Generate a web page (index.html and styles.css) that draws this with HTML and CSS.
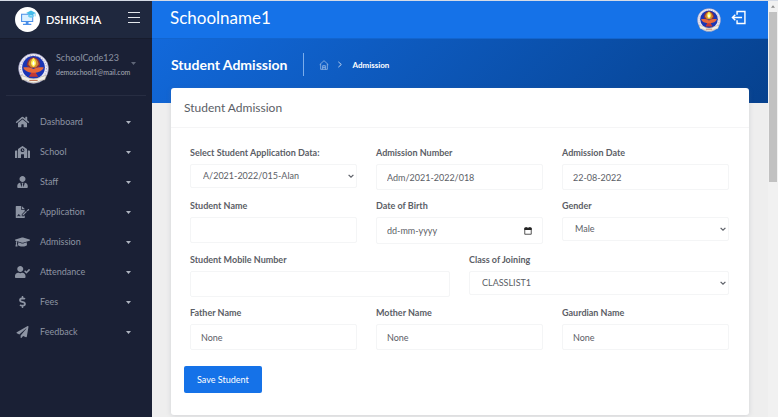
FILE: index.html
```html
<!DOCTYPE html>
<html lang="en">
<head>
<meta charset="utf-8">
<title>Student Admission</title>
<link rel="stylesheet" href="styles.css">
</head>
<body>
<svg class="defs" aria-hidden="true">
  <defs>
    <symbol id="crest" viewBox="0 0 60 60">
      <circle cx="30" cy="30" r="29" fill="#eceaf2" stroke="#7d7cae" stroke-width="1"/>
      <circle cx="30" cy="30" r="25" fill="none" stroke="#a9a5c8" stroke-width="2" stroke-dasharray="2 3"/>
      <circle cx="30" cy="28" r="22" fill="#1a35b5"/>
      <path d="M17 24C18 3 42 3 43 24l-5 5H22z" fill="#8d2f3c"/>
      <path d="M20 22c2-16 18-16 20 0l-5 6H25z" fill="#d08a34"/>
      <path d="M30 9c7 8 6 14 0 18-6-4-7-10 0-18z" fill="#fff04f"/>
      <path d="M30 15c3 4 3 7 0 9-3-2-3-5 0-9z" fill="#fff"/>
      <path d="M10 28c8-1 15 0 20 3 5-3 12-4 20-3-3 7-10 9-16 10l2 5H24l2-5c-6-1-13-3-16-10z" fill="#e8693a"/>
      <path d="M26 38h8l5 8H21z" fill="#c23a35"/>
      <path d="M5 43l10 3c9 5 21 5 30 0l10-3-3 9-8 1c-9 6-19 6-28 0l-8-1z" fill="#f3f0e8" stroke="#a29a8a" stroke-width="1"/>
      <path d="M22 53h16" stroke="#bc6b49" stroke-width="2"/>
    </symbol>
    <symbol id="caret" viewBox="0 0 10 6"><path d="M0 0h10L5 6z" fill="currentColor"/></symbol>
    <symbol id="chevron" viewBox="0 0 10 10"><path d="M1 3l4 4 4-4" fill="none" stroke="currentColor" stroke-width="2"/></symbol>
  </defs>
</svg>

<div class="app">
  <aside class="sidebar">
    <div class="brand">
      <svg class="brand-logo" viewBox="0 0 72 72" aria-hidden="true">
        <circle cx="36" cy="36" r="36" fill="#fff"/>
        <path d="M19 21h32v21H19z" fill="#dbf0ff" stroke="#4a8fe8" stroke-width="3"/>
        <path d="M31 43h8v5h8v4H23v-4h8z" fill="#4a8fe8"/>
        <path d="M32 17l14-7 14 7-14 7z" fill="#45bdea"/>
        <path d="M38 21v7c5 4 11 4 16 0v-7l-8 4z" fill="#6accf0"/>
        <path d="M58 18v9" stroke="#45bdea" stroke-width="2"/>
      </svg>
      <a class="brand-name" href="#">DSHIKSHA</a>
      <button class="menu-button" type="button" aria-label="Toggle menu"><span></span><span></span><span></span></button>
    </div>
    <div class="side-body">
      <a class="profile" href="#">
        <svg class="profile-crest" aria-hidden="true"><use href="#crest"/></svg>
        <span class="profile-text"><span class="profile-code">SchoolCode123</span><span class="profile-mail">demoschool1@mail.com</span></span>
        <svg class="caret" aria-hidden="true"><use href="#caret"/></svg>
      </a>
      <nav class="menu">
        <a href="#"><svg class="menu-icon" viewBox="0 0 576 512" aria-hidden="true"><path d="M280.37 148.26L96 300.11V464a16 16 0 0 0 16 16l112.06-.29a16 16 0 0 0 15.92-16V368a16 16 0 0 1 16-16h64a16 16 0 0 1 16 16v95.64a16 16 0 0 0 16 16.05L464 480a16 16 0 0 0 16-16V300L295.67 148.26a12.19 12.19 0 0 0-15.3 0zM571.6 251.47L488 182.56V44.05a12 12 0 0 0-12-12h-56a12 12 0 0 0-12 12v72.61L318.47 43a48 48 0 0 0-61 0L4.34 251.47a12 12 0 0 0-1.6 16.9l25.5 31A12 12 0 0 0 45.15 301l235.22-193.74a12.19 12.19 0 0 1 15.3 0L530.9 301a12 12 0 0 0 16.9-1.6l25.5-31a12 12 0 0 0-1.7-16.93z"/></svg><span>Dashboard</span><svg class="caret" aria-hidden="true"><use href="#caret"/></svg></a>
        <a href="#"><svg class="menu-icon" viewBox="0 0 640 512" aria-hidden="true"><path d="M0 224v272c0 8.84 7.16 16 16 16h80V192H32c-17.67 0-32 14.33-32 32zm360-48h-24v-40c0-4.42-3.58-8-8-8h-16c-4.42 0-8 3.58-8 8v64c0 4.42 3.58 8 8 8h48c4.42 0 8-3.58 8-8v-16c0-4.42-3.58-8-8-8zm137.75-63.96l-160-106.67a32.02 32.02 0 0 0-35.5 0l-160 106.67A32.002 32.002 0 0 0 128 138.66V512h128V368c0-8.84 7.16-16 16-16h96c8.84 0 16 7.16 16 16v144h128V138.67c0-10.7-5.35-20.69-14.25-26.63zM320 256c-44.18 0-80-35.82-80-80s35.82-80 80-80 80 35.82 80 80-35.82 80-80 80zm288-64h-64v320h80c8.84 0 16-7.16 16-16V224c0-17.67-14.33-32-32-32z"/></svg><span>School</span><svg class="caret" aria-hidden="true"><use href="#caret"/></svg></a>
        <a href="#"><svg class="menu-icon" viewBox="0 0 448 512" aria-hidden="true"><path d="M224 256c70.7 0 128-57.3 128-128S294.7 0 224 0 96 57.3 96 128s57.3 128 128 128zm95.8 32.6L272 480l-32-136 32-56h-96l32 56-32 136-47.8-191.4C56.9 292 0 350.3 0 422.4V464c0 26.5 21.5 48 48 48h352c26.5 0 48-21.5 48-48v-41.6c0-72.1-56.9-130.4-128.2-133.8z"/></svg><span>Staff</span><svg class="caret" aria-hidden="true"><use href="#caret"/></svg></a>
        <a href="#"><svg class="menu-icon" viewBox="0 0 576 512" aria-hidden="true"><path d="M24 0h200v136c0 13 11 24 24 24h136v66L256 352v80h90l38-36v92c0 13-11 24-24 24H24c-13 0-24-11-24-24V24C0 11 11 0 24 0zM256 0l128 128H256zM64 400v32h32c22 0 34-13 41-30l15 30h52v-32h-32l-26-50c-9-14-23-14-30 0l-18 36c-4 10-8 14-18 14zM288 366v34h34l154-154-34-34zM497 157l34 34-33 33-34-34zM518 137c12-12 24-12 34-2l14 14c12 12 12 24 2 34l-15 15-50-46z"/></svg><span>Application</span><svg class="caret" aria-hidden="true"><use href="#caret"/></svg></a>
        <a href="#"><svg class="menu-icon" viewBox="0 0 640 512" aria-hidden="true"><path d="M622.34 153.2L343.4 67.5c-15.2-4.67-31.6-4.67-46.79 0L17.66 153.2c-23.54 7.23-23.54 38.36 0 45.59l48.63 14.94c-10.67 13.19-17.23 29.28-17.88 46.9C38.78 266.15 32 276.11 32 288c0 10.78 5.68 19.85 13.86 25.65L20.33 428.53C18.11 438.52 25.71 448 35.94 448h56.11c10.24 0 17.84-9.48 15.62-19.47L82.14 313.65C90.32 307.85 96 298.78 96 288c0-11.57-6.47-21.25-15.66-26.87.76-15.02 8.44-28.3 20.69-36.72L296.6 284.5c9.06 2.78 26.44 6.25 46.79 0l278.95-85.7c23.55-7.24 23.55-38.36 0-45.6zM352.79 315.09c-28.53 8.76-52.84 3.92-65.59 0l-145.02-44.55L128 384c0 35.35 85.96 64 192 64s192-28.65 192-64l-14.18-113.47-145.03 44.56z"/></svg><span>Admission</span><svg class="caret" aria-hidden="true"><use href="#caret"/></svg></a>
        <a href="#"><svg class="menu-icon" viewBox="0 0 640 512" aria-hidden="true"><path d="M224 256c70.7 0 128-57.3 128-128S294.7 0 224 0 96 57.3 96 128s57.3 128 128 128zm89.6 32h-16.7c-22.2 10.2-46.9 16-72.9 16s-50.6-5.8-72.9-16h-16.7C60.2 288 0 348.2 0 422.4V464c0 26.5 21.5 48 48 48h352c26.5 0 48-21.5 48-48v-41.6c0-74.2-60.2-134.4-134.4-134.4zM636.6 159.6l-27.8-28.2c-4.7-4.7-12.3-4.7-17-.1L487 235.3l-45.4-45.8c-4.7-4.7-12.3-4.7-17-.1l-28.3 28c-4.7 4.7-4.7 12.3-.1 17l81.8 82.5c4.7 4.7 12.3 4.7 17 .1l141.5-140.4c4.7-4.7 4.8-12.3.1-17z"/></svg><span>Attendance</span><svg class="caret" aria-hidden="true"><use href="#caret"/></svg></a>
        <a href="#"><svg class="menu-icon" viewBox="0 0 288 512" aria-hidden="true"><path d="M209.2 233.4l-108-31.6C88.7 198.2 80 186.5 80 173.5c0-16.3 13.2-29.5 29.5-29.5h66.3c12.2 0 24.2 3.7 34.2 10.5 6.1 4.1 14.3 3.1 19.5-2l34.8-34c7.1-6.9 6.1-18.4-1.8-24.5C238 74.8 207.4 64.1 176 64V16c0-8.8-7.2-16-16-16h-32c-8.8 0-16 7.2-16 16v48h-2.5C45.8 64-5.4 118.7.5 183.6c4.2 46.1 39.4 83.6 83.8 96.6l102.5 30c12.5 3.7 21.2 15.3 21.2 28.3 0 16.3-13.2 29.5-29.5 29.5h-66.3C100 368 88 364.3 78 357.5c-6.1-4.1-14.3-3.1-19.5 2l-34.8 34c-7.1 6.9-6.1 18.4 1.8 24.5 24.5 19.2 55.1 29.9 86.5 30v48c0 8.8 7.2 16 16 16h32c8.8 0 16-7.2 16-16v-48.2c46.6-.9 90.3-28.6 105.7-72.7 21.5-61.6-14.6-124.8-72.5-141.7z"/></svg><span>Fees</span><svg class="caret" aria-hidden="true"><use href="#caret"/></svg></a>
        <a href="#"><svg class="menu-icon" viewBox="0 0 512 512" aria-hidden="true"><path d="M476 3.2L12.5 270.6c-18.1 10.4-15.8 35.6 2.2 43.2L121 358.4l287.3-253.2c5.5-4.9 13.3 2.6 8.6 8.3L176 407v80.5c0 23.6 28.5 32.9 42.5 15.8L282 426l124.6 52.2c14.2 6 30.4-2.9 33-18.2l72-432C515 7.8 493.3-6.8 476 3.2z"/></svg><span>Feedback</span><svg class="caret" aria-hidden="true"><use href="#caret"/></svg></a>
      </nav>
    </div>
  </aside>

  <div class="page">
    <header class="topbar">
      <span class="school">Schoolname1</span>
      <svg class="top-crest" aria-hidden="true"><use href="#crest"/></svg>
      <button class="logout" type="button" aria-label="Log out">
        <svg viewBox="0 0 42 42" aria-hidden="true"><path d="M17 13V4h22v34H17v-9M31 21H4M12 13l-8 8 8 8" fill="none" stroke="currentColor" stroke-width="4"/></svg>
      </button>
    </header>
    <div class="banner">
      <h1>Student Admission</h1>
      <nav class="crumbs" aria-label="Breadcrumb">
        <a href="#" aria-label="Home"><svg class="crumb-home" viewBox="0 0 30 30" aria-hidden="true"><path d="M2 14L15 2l13 12M5 12v16h20V12M11 28V17h8v11M11 22h8" fill="none" stroke="currentColor" stroke-width="2"/></svg></a>
        <svg class="crumb-arrow" viewBox="0 0 12 20" aria-hidden="true"><path d="M1 2l9 8-9 8" fill="none" stroke="currentColor" stroke-width="3"/></svg>
        <a href="#">Admission</a>
      </nav>
    </div>
    <main class="card">
      <h2>Student Admission</h2>
      <form>
        <div class="fields">
          <div class="field"><label for="app">Select Student Application Data:</label><div class="select"><select id="app"><option>A/2021-2022/015-Alan</option></select><svg aria-hidden="true"><use href="#chevron"/></svg></div></div>
          <div class="field"><label for="num">Admission Number</label><input id="num" type="text" value="Adm/2021-2022/018"></div>
          <div class="field"><label for="adm">Admission Date</label><input id="adm" type="text" value="22-08-2022"></div>
          <div class="field"><label for="name">Student Name</label><input id="name" type="text"></div>
          <div class="field"><label for="dob">Date of Birth</label><div class="date"><input id="dob" type="text" placeholder="dd-mm-yyyy"><button type="button" aria-label="Open calendar"><svg viewBox="0 0 21 21" aria-hidden="true"><path d="M2 3h17v16H2z" fill="none" stroke="currentColor" stroke-width="2"/><path d="M1 2h19v6H1zM4 0h3v3H4zM14 0h3v3h-3z" fill="currentColor"/></svg></button></div></div>
          <div class="field"><label for="gender">Gender</label><div class="select"><select id="gender"><option>Male</option></select><svg aria-hidden="true"><use href="#chevron"/></svg></div></div>
          <div class="field half"><label for="mobile">Student Mobile Number</label><input id="mobile" type="text"></div>
          <div class="field half"><label for="class">Class of Joining</label><div class="select"><select id="class"><option>CLASSLIST1</option></select><svg aria-hidden="true"><use href="#chevron"/></svg></div></div>
          <div class="field"><label for="father">Father Name</label><input id="father" type="text" value="None"></div>
          <div class="field"><label for="mother">Mother Name</label><input id="mother" type="text" value="None"></div>
          <div class="field"><label for="guardian">Gaurdian Name</label><input id="guardian" type="text" value="None"></div>
        </div>
        <button class="save" type="submit">Save Student</button>
      </form>
    </main>
  </div>

  <div class="scroll" aria-hidden="true">
    <svg class="scroll-up" viewBox="0 0 10 6"><path d="M0 6h10L5 0z" fill="currentColor"/></svg>
    <div class="scroll-thumb"></div>
  </div>
</div>
</body>
</html>
```
FILE: styles.css
```css
* { box-sizing: border-box; }
body { margin: 0; font-family: Lato, sans-serif; font-size: 9px; line-height: 12px; color: #5b5e66; background: #eee; }
a { color: inherit; text-decoration: none; }
button, input, select { font: inherit; color: inherit; margin: 0; }
.defs { display: none; }
svg { flex: none; }

.app { display: grid; grid-template-columns: 152px minmax(0, 1fr) 10px; min-height: 100vh; border-top: 1px solid #d5dbe6; }

.sidebar { background: #1a2035; color: #8d94a3; display: flex; flex-direction: column; }
.brand { display: flex; align-items: center; height: 38px; padding: 0 12px 0 15px; background: #1f283e; border-bottom: 1px solid #171c2d; color: #fff; }
.brand-logo { width: 25px; height: 25px; }
.brand-name { margin-left: 6px; font-size: 11px; font-weight: 600; line-height: 16px; }
.menu-button { margin: 0 0 4px auto; display: grid; gap: 4px; padding: 0; border: 0; background: none; }
.menu-button span { width: 12px; height: 1px; background: #e4e7eb; }
.side-body { padding: 0 6px; }
.profile { display: flex; align-items: center; height: 57px; padding: 2px 10px 0 12px; border-bottom: 1px solid #272d42; }
.profile-crest { width: 31px; height: 31px; }
.profile-text { display: grid; gap: 2px; margin: 0 0 6px 7px; }
.profile-code { font-size: 9px; }
.profile-mail { font-size: 7px; color: #a6acb8; }
.profile .caret { margin: 0 0 10px auto; color: #5f6678; }
.caret { width: 5px; height: 3px; }
.menu { padding-top: 11px; }
.menu a { display: flex; align-items: center; height: 30px; padding: 0 15px 0 9px; }
.menu-icon { width: 15px; height: 12px; fill: currentColor; }
.menu span { flex: 1; margin-left: 10px; }
.menu .caret { color: #adb3bf; }

.page { min-width: 0; }
.topbar { display: flex; align-items: center; height: 38px; padding: 0 22px 4px 18px; background: #1572e8; border-bottom: 1px solid #1265cf; color: #fff; }
.school { flex: 1; font-size: 17px; line-height: 24px; }
.top-crest { width: 24px; height: 24px; margin-top: 4px; }
.logout { display: flex; margin-left: 10px; padding: 0; border: 0; background: none; }
.logout svg { width: 15px; height: 15px; }
.banner { display: flex; align-items: flex-start; height: 64px; padding: 14px 19px; background: linear-gradient(-45deg, #06418e, #1269db); color: #fff; }
h1 { margin: 0; font-size: 14px; line-height: 24px; }
.crumbs { display: flex; align-items: center; height: 23px; margin-left: 16px; padding-left: 15px; border-left: 1px solid #7badeb; font-size: 8px; font-weight: 700; }
.crumbs a { display: flex; }
.crumb-home { width: 10px; height: 10px; opacity: .7; }
.crumb-arrow { width: 4px; height: 7px; margin: 0 10px 0 9px; opacity: .7; }

.card { margin: -15px 19px 2px; background: #fff; border-radius: 3px; box-shadow: 0 1px 5px #69707d33; }
h2 { margin: 0; height: 40px; padding: 0 13px; border-bottom: 1px solid #f5f5f6; font-size: 12px; font-weight: 400; line-height: 40px; }
form { padding: 19px 20px 22px 19px; }
.fields { display: grid; grid-template-columns: repeat(6, minmax(0, 1fr)); column-gap: 19px; row-gap: 10px; }
.field { grid-column: span 2; }
.half { grid-column: span 3; }
label { display: block; margin-bottom: 5px; font-weight: 700; }
input, select { display: block; width: 100%; height: 26px; padding: 0 10px; border: 1px solid #f4f5f6; border-radius: 2px; background: #fff; }
select { height: 24px; padding: 0 12px; appearance: none; }
input::placeholder { color: inherit; opacity: 1; }
.select, .date { display: grid; align-items: center; }
.select > *, .date > * { grid-area: 1 / 1; }
.select svg { width: 6px; height: 6px; margin-right: 3px; justify-self: end; pointer-events: none; }
.date input { height: 27px; }
.date button { display: flex; justify-self: end; margin-right: 11px; padding: 0; border: 0; background: none; color: #222; }
.date svg { width: 8px; height: 8px; }
.save { display: block; height: 27px; margin: 16px 0 0 -6px; padding: 0 13px; border: 0; border-radius: 2px; background: #1572e8; color: #fff; }

.scroll { display: flex; flex-direction: column; align-items: center; background: #f1f1f1; color: #8b8b8b; }
.scroll-up { width: 4px; height: 3px; margin: 4px 0; }
.scroll-thumb { width: 8px; height: 170px; background: #c1c1c1; }
```
